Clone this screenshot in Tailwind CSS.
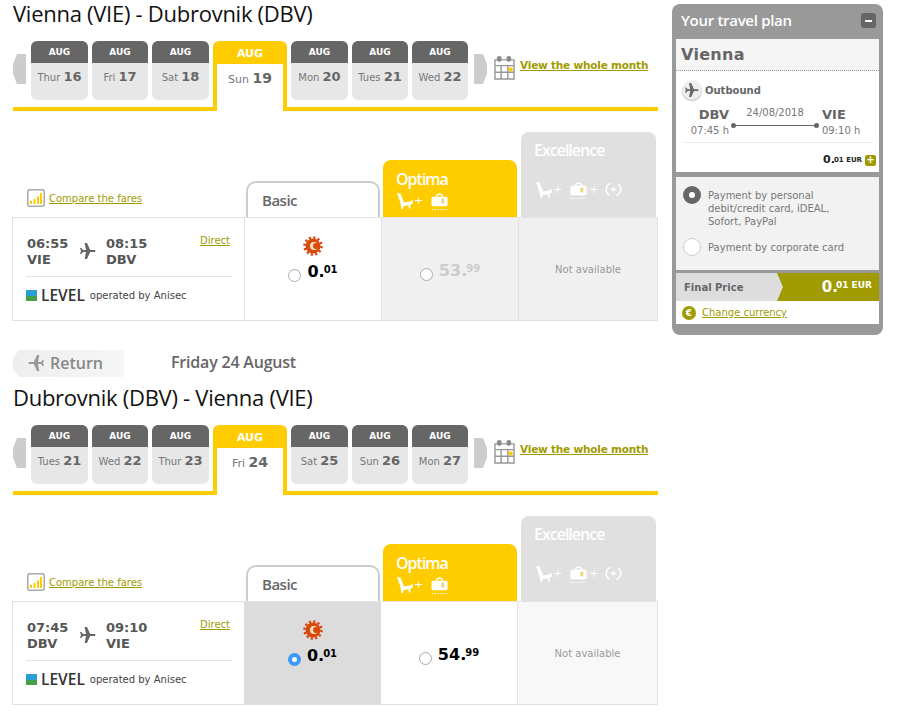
<!DOCTYPE html>
<html lang="en"><head><meta charset="utf-8"><title>Flight selection</title>
<script src="https://cdn.jsdelivr.net/npm/@tailwindcss/browser@4"></script></head>
<body class="bg-white font-['DejaVu_Sans',sans-serif] overflow-hidden">
<svg class="hidden" width="0" height="0">
<defs>
<symbol id="plane" viewBox="0 0 16 16"><path d="M0 5h1.300L3 7h3L4.600 0H7l3.200 7h4.300a1 1 0 0 1 0 2h-4.300L7 16H4.600L6 9H3l-1.700 2H0l1-3z"/></symbol>
<symbol id="chair" viewBox="0 0 16 16"><path d="M0 0l3.500.5L7 9.500l6-1L16 7l-.5 4-2 .5v4H12l-.7-3.300-4.800 1.100L6 16H4.300L3.500 10z" fill="#fff"/></symbol>
<symbol id="bag" viewBox="0 0 18 20"><path d="M2 5h3c0-5 8-5 8 0h3a1.500 1.500 0 0 1 1.500 1.500v7A1.500 1.500 0 0 1 16 15H2a1.500 1.500 0 0 1-1.500-1.500v-7A1.500 1.500 0 0 1 2 5zm4.500 0h5c0-3-5-3-5 0z" fill="#fff" fill-rule="evenodd"/><rect x="11" y="7" width="3" height="5" fill="#e8d67a"/><path d="M1 18.500h16" stroke="#fff" stroke-width="1.200" stroke-dasharray="1.500 1.500"/></symbol>
<symbol id="extra" viewBox="0 0 18 18"><path d="M6 2.500a7 7 0 0 0-1.500 12.500M12 15.500A7 7 0 0 0 13.500 3M9 6v6M6 9h6" fill="none" stroke="#fff" stroke-width="1.500"/></symbol>
<symbol id="sun" viewBox="0 0 20 20"><circle cx="10" cy="10" r="7.500" fill="#d9480f"/><circle cx="10" cy="10" r="8.500" fill="none" stroke="#d9480f" stroke-width="2.500" stroke-dasharray="2.200 2.250"/><circle cx="11" cy="10" r="4" fill="#f7e3b5"/><circle cx="13" cy="10" r="3" fill="#d9480f"/></symbol>
<symbol id="cal" viewBox="0 0 22 26"><path d="M1 5h20v20H1zM1 11h20M1 18h20M7.500 11v14M14.500 11v14" fill="none" stroke="#999" stroke-width="1.500"/><rect x="3" y="1" width="5" height="6" rx="2.500" fill="#888"/><rect x="13" y="1" width="5" height="6" rx="2.500" fill="#888"/><rect x="15.500" y="13" width="4" height="4" fill="#fc0"/></symbol>
<symbol id="bars" viewBox="0 0 18 18"><rect x=".75" y=".75" width="16.500" height="16.500" rx="2" fill="#fff" stroke="#aaa" stroke-width="1.500"/><path d="M3 12h2v3H3zM6.500 10h2v5h-2zM10 7.500h2V15h-2zM13 4h2v11h-2z" fill="#fc0"/></symbol>
</defs></svg>

<div class="flex items-start w-[920px] h-[713px]">
<main class="ml-[12px] w-[646px] shrink-0">

<section>
<h1 class="ml-px h-[28px] mb-[13px] font-['Open_Sans',sans-serif] text-[22px] leading-[27px] text-[#111] tracking-[-0.27px] whitespace-nowrap">Vienna (VIE) - Dubrovnik (DBV)</h1>
<div class="ml-px w-[645px] h-[70px] border-b-[4px] border-[#fc0] flex items-start box-border">
  <div class="mt-[13px] w-[13px] h-[30px] bg-[#ccc] [clip-path:polygon(100%_0,100%_100%,30%_100%,0_65%,0_35%,30%_0)]"></div>
  <div class="flex gap-[4px] ml-[5px]">
    <div class="w-[57px] h-[59px] rounded-[6px] overflow-hidden bg-[#e7e7e7] text-center"><div class="h-[22px] bg-[#666] text-white text-[9px] font-bold leading-[22px]">AUG</div><div class="h-[37px] leading-[27px] text-[#777] text-[10px]">Thur <b class="text-[13px] text-[#666]">16</b></div></div>
    <div class="w-[56px] h-[59px] rounded-[6px] overflow-hidden bg-[#e7e7e7] text-center"><div class="h-[22px] bg-[#666] text-white text-[9px] font-bold leading-[22px]">AUG</div><div class="h-[37px] leading-[27px] text-[#777] text-[10px]">Fri <b class="text-[13px] text-[#666]">17</b></div></div>
    <div class="w-[57px] h-[59px] rounded-[6px] overflow-hidden bg-[#e7e7e7] text-center"><div class="h-[22px] bg-[#666] text-white text-[9px] font-bold leading-[22px]">AUG</div><div class="h-[37px] leading-[27px] text-[#777] text-[10px]">Sat <b class="text-[13px] text-[#666]">18</b></div></div>
    <div class="relative z-10 w-[74px] h-[70px] rounded-t-[6px] overflow-hidden bg-white border-x-[4px] border-[#fc0] text-center"><div class="h-[23px] -mx-[4px] bg-[#fc0] text-white text-[11px] font-bold leading-[25px]">AUG</div><div class="leading-[28px] text-[#777] text-[11px]">Sun <b class="text-[14px] text-[#666]">19</b></div></div>
    <div class="w-[57px] h-[59px] rounded-[6px] overflow-hidden bg-[#e7e7e7] text-center"><div class="h-[22px] bg-[#666] text-white text-[9px] font-bold leading-[22px]">AUG</div><div class="h-[37px] leading-[27px] text-[#777] text-[10px]">Mon <b class="text-[13px] text-[#666]">20</b></div></div>
    <div class="w-[56px] h-[59px] rounded-[6px] overflow-hidden bg-[#e7e7e7] text-center"><div class="h-[22px] bg-[#666] text-white text-[9px] font-bold leading-[22px]">AUG</div><div class="h-[37px] leading-[27px] text-[#777] text-[10px]">Tues <b class="text-[13px] text-[#666]">21</b></div></div>
    <div class="w-[56px] h-[59px] rounded-[6px] overflow-hidden bg-[#e7e7e7] text-center"><div class="h-[22px] bg-[#666] text-white text-[9px] font-bold leading-[22px]">AUG</div><div class="h-[37px] leading-[27px] text-[#777] text-[10px]">Wed <b class="text-[13px] text-[#666]">22</b></div></div>
  </div>
  <div class="ml-[6px] mt-[13px] w-[13px] h-[30px] bg-[#ccc] [clip-path:polygon(0_0,70%_0,100%_35%,100%_65%,70%_100%,0_100%)]"></div>
  <svg class="ml-[7px] mt-[14px] w-[21px] h-[25px]"><use href="#cal"/></svg>
  <a class="ml-[5px] mt-[17px] text-[10.500px] tracking-[-0.2px] font-bold text-[#a09b00] underline leading-[14px] whitespace-nowrap">View the whole month</a>
</div>
<div class="mt-[21px] h-[85px] flex items-end">
  <div class="w-[234px] h-[36px] pl-[15px] pb-[10px] flex items-end"><svg class="w-[18px] h-[18px]"><use href="#bars"/></svg><a class="ml-[4px] mb-[1px] text-[10px] text-[#a09b00] underline leading-[14px]">Compare the fares</a></div>
  <div class="w-[134px] h-[36px] rounded-t-[10px] border-2 border-b-0 border-[#ccc] pl-[14px] pt-[7px] font-['Open_Sans',sans-serif] text-[15px] font-semibold leading-[20px] text-[#666] tracking-[-0.5px]">Basic</div>
  <div class="ml-[3px] w-[134px] h-[57px] rounded-t-[8px] bg-[#fc0] pl-[13px] pt-[9px] text-white"><div class="font-['Open_Sans',sans-serif] text-[16px] font-semibold leading-[20px] tracking-[-1px]">Optima</div><div class="mt-[3px] ml-px flex items-start"><svg class="w-[16px] h-[16px] mt-px"><use href="#chair"/></svg><span class="ml-[1px] text-[11px] leading-[18px] mr-[8px]">+</span><svg class="w-[17px] h-[19px]"><use href="#bag"/></svg></div></div>
  <div class="ml-[4px] w-[135px] h-[85px] rounded-t-[8px] bg-[#e0e0e0] pl-[13px] pt-[8px] text-white"><div class="font-['Open_Sans',sans-serif] text-[16px] font-semibold leading-[20px] tracking-[-1px]">Excellence</div><div class="mt-[21px] ml-[2px] flex items-start"><svg class="w-[16px] h-[16px] mt-px"><use href="#chair"/></svg><span class="ml-[1px] text-[11px] leading-[18px] mr-[8px]">+</span><svg class="w-[17px] h-[19px]"><use href="#bag"/></svg><span class="ml-[2px] text-[11px] leading-[18px] mr-[7px]">+</span><svg class="w-[17px] h-[17px]"><use href="#extra"/></svg></div></div>
</div>
<div class="grid grid-cols-[232px_137px_137px_138px] h-[104px] border border-[#e3e3e3]">
  <div class="pl-[14px] pr-[12px] pt-[18px] border-r border-[#e3e3e3]">
    <div class="flex h-[40px] items-start">
      <div class="w-[53px] text-[13px] font-bold leading-[16px] text-[#555]">06:55<br>VIE</div>
      <svg class="w-[16px] h-[16px] mt-[7px] fill-[#666]"><use href="#plane"/></svg>
      <div class="ml-[10px] flex-1 text-[13px] font-bold leading-[16px] text-[#555]">08:15<br>DBV</div>
      <a class="mr-[2px] text-[10px] text-[#a09b00] underline leading-[14px] -mt-[2px]">Direct</a>
    </div>
    <div class="-ml-px border-t border-[#e3e3e3] flex items-center h-[38px]">
      <div class="w-[11px] h-[11px] bg-[linear-gradient(#2a9fd6_50%,#43a047_50%)]"></div>
      <b class="ml-[4px] font-['Open_Sans',sans-serif] text-[15.500px] font-semibold text-[#333]">LEVEL</b>
      <span class="ml-[5px] text-[10px] text-[#444]">operated by Anisec</span>
    </div>
  </div>
  <div class="border-r border-[#e3e3e3] flex flex-col items-center pt-[18px]"><svg class="w-[20px] h-[20px]"><use href="#sun"/></svg><div class="mt-[4px] flex items-center gap-[6px]"><span class="mt-[6px] w-[13px] h-[13px] rounded-full bg-white border border-[#aaa]"></span><span class="text-[16px] font-bold text-black">0.<span class="-ml-px text-[10px] align-[4px]">01</span></span></div></div>
  <div class="border-r border-[#e3e3e3] bg-[#f0f0f0] flex items-center justify-center gap-[6px]"><span class="mt-[10px] w-[13px] h-[13px] rounded-full bg-white border border-[#aaa]"></span><span class="mt-[3px] text-[16px] font-bold text-[#ccc]">53.<span class="-ml-px text-[10px] align-[4px]">99</span></span></div>
  <div class="bg-[#f0f0f0] flex items-center justify-center text-[10px] text-[#999]">Not available</div>
</div>
</section>

<section class="mt-[30px]">
<div class="h-[25px] flex items-center">
  <div class="ml-px w-[111px] h-[27px] bg-[linear-gradient(90deg,#eee,#f6f6f6)] [clip-path:polygon(6px_0,100%_0,100%_100%,6px_100%,0_70%,0_30%)] flex items-center pl-[14px] pb-[2px] gap-[5px] font-['Open_Sans',sans-serif] text-[16px] font-semibold text-[#888]"><svg class="w-[18px] h-[16px] fill-[#999] -scale-x-100"><use href="#plane"/></svg>Return</div>
  <div class="ml-[47px] pb-[4px] font-['Open_Sans',sans-serif] text-[16px] font-semibold text-[#666] tracking-[-0.2px]">Friday 24 August</div>
</div>
<h1 class="mt-[8px] ml-px h-[28px] mb-[13px] font-['Open_Sans',sans-serif] text-[22px] leading-[27px] text-[#111] tracking-[-0.27px] whitespace-nowrap">Dubrovnik (DBV) - Vienna (VIE)</h1>
<div class="ml-px w-[645px] h-[70px] border-b-[4px] border-[#fc0] flex items-start box-border">
  <div class="mt-[13px] w-[13px] h-[30px] bg-[#ccc] [clip-path:polygon(100%_0,100%_100%,30%_100%,0_65%,0_35%,30%_0)]"></div>
  <div class="flex gap-[4px] ml-[5px]">
    <div class="w-[57px] h-[59px] rounded-[6px] overflow-hidden bg-[#e7e7e7] text-center"><div class="h-[22px] bg-[#666] text-white text-[9px] font-bold leading-[22px]">AUG</div><div class="h-[37px] leading-[27px] text-[#777] text-[10px]">Tues <b class="text-[13px] text-[#666]">21</b></div></div>
    <div class="w-[56px] h-[59px] rounded-[6px] overflow-hidden bg-[#e7e7e7] text-center"><div class="h-[22px] bg-[#666] text-white text-[9px] font-bold leading-[22px]">AUG</div><div class="h-[37px] leading-[27px] text-[#777] text-[10px]">Wed <b class="text-[13px] text-[#666]">22</b></div></div>
    <div class="w-[57px] h-[59px] rounded-[6px] overflow-hidden bg-[#e7e7e7] text-center"><div class="h-[22px] bg-[#666] text-white text-[9px] font-bold leading-[22px]">AUG</div><div class="h-[37px] leading-[27px] text-[#777] text-[10px]">Thur <b class="text-[13px] text-[#666]">23</b></div></div>
    <div class="relative z-10 w-[74px] h-[70px] rounded-t-[6px] overflow-hidden bg-white border-x-[4px] border-[#fc0] text-center"><div class="h-[23px] -mx-[4px] bg-[#fc0] text-white text-[11px] font-bold leading-[25px]">AUG</div><div class="leading-[28px] text-[#777] text-[11px]">Fri <b class="text-[14px] text-[#666]">24</b></div></div>
    <div class="w-[57px] h-[59px] rounded-[6px] overflow-hidden bg-[#e7e7e7] text-center"><div class="h-[22px] bg-[#666] text-white text-[9px] font-bold leading-[22px]">AUG</div><div class="h-[37px] leading-[27px] text-[#777] text-[10px]">Sat <b class="text-[13px] text-[#666]">25</b></div></div>
    <div class="w-[56px] h-[59px] rounded-[6px] overflow-hidden bg-[#e7e7e7] text-center"><div class="h-[22px] bg-[#666] text-white text-[9px] font-bold leading-[22px]">AUG</div><div class="h-[37px] leading-[27px] text-[#777] text-[10px]">Sun <b class="text-[13px] text-[#666]">26</b></div></div>
    <div class="w-[56px] h-[59px] rounded-[6px] overflow-hidden bg-[#e7e7e7] text-center"><div class="h-[22px] bg-[#666] text-white text-[9px] font-bold leading-[22px]">AUG</div><div class="h-[37px] leading-[27px] text-[#777] text-[10px]">Mon <b class="text-[13px] text-[#666]">27</b></div></div>
  </div>
  <div class="ml-[6px] mt-[13px] w-[13px] h-[30px] bg-[#ccc] [clip-path:polygon(0_0,70%_0,100%_35%,100%_65%,70%_100%,0_100%)]"></div>
  <svg class="ml-[7px] mt-[14px] w-[21px] h-[25px]"><use href="#cal"/></svg>
  <a class="ml-[5px] mt-[17px] text-[10.500px] tracking-[-0.2px] font-bold text-[#a09b00] underline leading-[14px] whitespace-nowrap">View the whole month</a>
</div>
<div class="mt-[21px] h-[85px] flex items-end">
  <div class="w-[234px] h-[36px] pl-[15px] pb-[10px] flex items-end"><svg class="w-[18px] h-[18px]"><use href="#bars"/></svg><a class="ml-[4px] mb-[1px] text-[10px] text-[#a09b00] underline leading-[14px]">Compare the fares</a></div>
  <div class="w-[134px] h-[36px] rounded-t-[10px] border-2 border-b-0 border-[#ccc] pl-[14px] pt-[7px] font-['Open_Sans',sans-serif] text-[15px] font-semibold leading-[20px] text-[#666] tracking-[-0.5px]">Basic</div>
  <div class="ml-[3px] w-[134px] h-[57px] rounded-t-[8px] bg-[#fc0] pl-[13px] pt-[9px] text-white"><div class="font-['Open_Sans',sans-serif] text-[16px] font-semibold leading-[20px] tracking-[-1px]">Optima</div><div class="mt-[3px] ml-px flex items-start"><svg class="w-[16px] h-[16px] mt-px"><use href="#chair"/></svg><span class="ml-[1px] text-[11px] leading-[18px] mr-[8px]">+</span><svg class="w-[17px] h-[19px]"><use href="#bag"/></svg></div></div>
  <div class="ml-[4px] w-[135px] h-[85px] rounded-t-[8px] bg-[#e0e0e0] pl-[13px] pt-[8px] text-white"><div class="font-['Open_Sans',sans-serif] text-[16px] font-semibold leading-[20px] tracking-[-1px]">Excellence</div><div class="mt-[21px] ml-[2px] flex items-start"><svg class="w-[16px] h-[16px] mt-px"><use href="#chair"/></svg><span class="ml-[1px] text-[11px] leading-[18px] mr-[8px]">+</span><svg class="w-[17px] h-[19px]"><use href="#bag"/></svg><span class="ml-[2px] text-[11px] leading-[18px] mr-[7px]">+</span><svg class="w-[17px] h-[17px]"><use href="#extra"/></svg></div></div>
</div>
<div class="grid grid-cols-[231px_137px_137px_139px] h-[104px] border border-[#e3e3e3]">
  <div class="pl-[14px] pr-[12px] pt-[18px]">
    <div class="flex h-[40px] items-start">
      <div class="w-[53px] text-[13px] font-bold leading-[16px] text-[#555]">07:45<br>DBV</div>
      <svg class="w-[16px] h-[16px] mt-[7px] fill-[#666]"><use href="#plane"/></svg>
      <div class="ml-[10px] flex-1 text-[13px] font-bold leading-[16px] text-[#555]">09:10<br>VIE</div>
      <a class="mr-[2px] text-[10px] text-[#a09b00] underline leading-[14px] -mt-[2px]">Direct</a>
    </div>
    <div class="-ml-px border-t border-[#e3e3e3] flex items-center h-[38px]">
      <div class="w-[11px] h-[11px] bg-[linear-gradient(#2a9fd6_50%,#43a047_50%)]"></div>
      <b class="ml-[4px] font-['Open_Sans',sans-serif] text-[15.500px] font-semibold text-[#333]">LEVEL</b>
      <span class="ml-[5px] text-[10px] text-[#444]">operated by Anisec</span>
    </div>
  </div>
  <div class="bg-[#dcdcdc] flex flex-col items-center pt-[18px]"><svg class="w-[20px] h-[20px]"><use href="#sun"/></svg><div class="mt-[4px] flex items-center gap-[6px]"><span class="mt-[6px] w-[13px] h-[13px] rounded-full bg-white border-[4px] border-[#3b99fc]"></span><span class="text-[16px] font-bold text-black">0.<span class="-ml-px text-[10px] align-[4px]">01</span></span></div></div>
  <div class="border-r border-[#e3e3e3] flex items-center justify-center gap-[6px]"><span class="mt-[10px] w-[13px] h-[13px] rounded-full bg-white border border-[#aaa]"></span><span class="mt-[3px] text-[16px] font-bold text-black">54.<span class="-ml-px text-[10px] align-[4px]">99</span></span></div>
  <div class="bg-[#f8f8f8] flex items-center justify-center text-[10px] text-[#999]">Not available</div>
</div>
</section>
</main>

<aside class="ml-[14px] mt-[4px] w-[211px] h-[331px] shrink-0 rounded-[8px] bg-[#999] px-[4px] pb-[11px] flex flex-col">
  <div class="h-[35px] pb-[2px] flex items-center justify-between pl-[5px] pr-[3px] font-['Open_Sans',sans-serif] text-[15px] font-semibold text-white tracking-[-0.3px]">Your travel plan<span class="w-[15px] h-[15px] rounded-[3px] bg-[#666] flex items-center justify-center"><span class="w-[7px] h-[2px] bg-white"></span></span></div>
  <div class="h-[133px] bg-white">
    <div class="h-[32px] bg-[#f5f5f5] border-b border-dotted border-[#999] pl-[5px] text-[16px] font-bold leading-[32px] text-[#666] tracking-[0.3px]">Vienna</div>
    <div class="flex items-center h-[20px] mt-[9px] pl-[6px]"><span class="w-[20px] h-[20px] rounded-full bg-[#eee] shadow-[0_1px_1px_#bbb] flex items-center justify-center"><svg class="w-[14px] h-[14px] fill-[#666]"><use href="#plane"/></svg></span><b class="ml-[3px] text-[10px] text-[#666]">Outbound</b></div>
    <div class="flex mt-[6px] h-[33px] pl-[13px]">
      <div class="w-[40px] text-right"><b class="block text-[13px] leading-[18px] text-[#666]">DBV</b><span class="block text-[10px] leading-[14px] text-[#777] whitespace-nowrap">07:45 h</span></div>
      <div class="w-[92px] flex flex-col items-center px-[4px]"><span class="text-[10px] leading-[14px] text-[#777]">24/08/2018</span><span class="mt-[5px] relative block w-full h-px bg-[#666]"><span class="absolute -left-[2px] -top-[2px] w-[5px] h-[5px] rounded-full bg-[#666]"></span><span class="absolute -right-[2px] -top-[2px] w-[5px] h-[5px] rounded-full bg-[#666]"></span></span></div>
      <div class="ml-px w-[50px]"><b class="block text-[13px] leading-[18px] text-[#666]">VIE</b><span class="block text-[10px] leading-[14px] text-[#777] whitespace-nowrap">09:10 h</span></div>
    </div>
    <div class="mx-[6px] mt-[3px] border-t border-[#eee]"></div>
    <div class="flex items-center justify-end h-[22px] pr-[3px] mt-[6px] text-[#222] font-bold"><span class="text-[11px]">0.</span><span class="text-[7px] -ml-px">01 EUR</span><span class="ml-[3px] w-[11px] h-[11px] rounded-[2px] bg-[#a09b00] text-white text-[10px] leading-[10px] text-center">+</span></div>
  </div>
  <div class="mt-[5px] h-[93px] bg-[#f2f2f2] pl-[7px] pt-[9px] pr-[6px] text-[10px] leading-[13px] text-[#777]">
    <div class="flex gap-[7px]"><span class="shrink-0 w-[18px] h-[18px] rounded-full bg-white border-[6px] border-[#666]"></span><span class="mt-[3px]">Payment by personal<br>debit/credit card, iDEAL,<br>Sofort, PayPal</span></div>
    <div class="flex gap-[7px] mt-[10px] items-center"><span class="shrink-0 w-[18px] h-[18px] rounded-full bg-white border border-[#ccc]"></span><span>Payment by corporate card</span></div>
  </div>
  <div class="mt-[3px] h-[28px] bg-[#ddd] flex items-center justify-between">
    <b class="pl-[8px] text-[10px] text-[#666]">Final Price</b>
    <div class="w-[102px] h-full bg-[#a09b00] text-white font-bold flex items-center justify-end pr-[7px] [clip-path:polygon(0_0,100%_0,100%_100%,0_100%,6px_50%)]"><span class="text-[15px]">0.</span><span class="text-[9px] -ml-[2px] mb-[3px]">01 EUR</span></div>
  </div>
  <div class="h-[23px] bg-white flex items-center pl-[6px]"><span class="w-[14px] h-[14px] rounded-full bg-[#a09b00] text-white text-[9px] font-bold text-center leading-[14px]">€</span><a class="ml-[6px] text-[10px] text-[#a09b00] underline">Change currency</a></div>
</aside>
</div>
</body></html>
